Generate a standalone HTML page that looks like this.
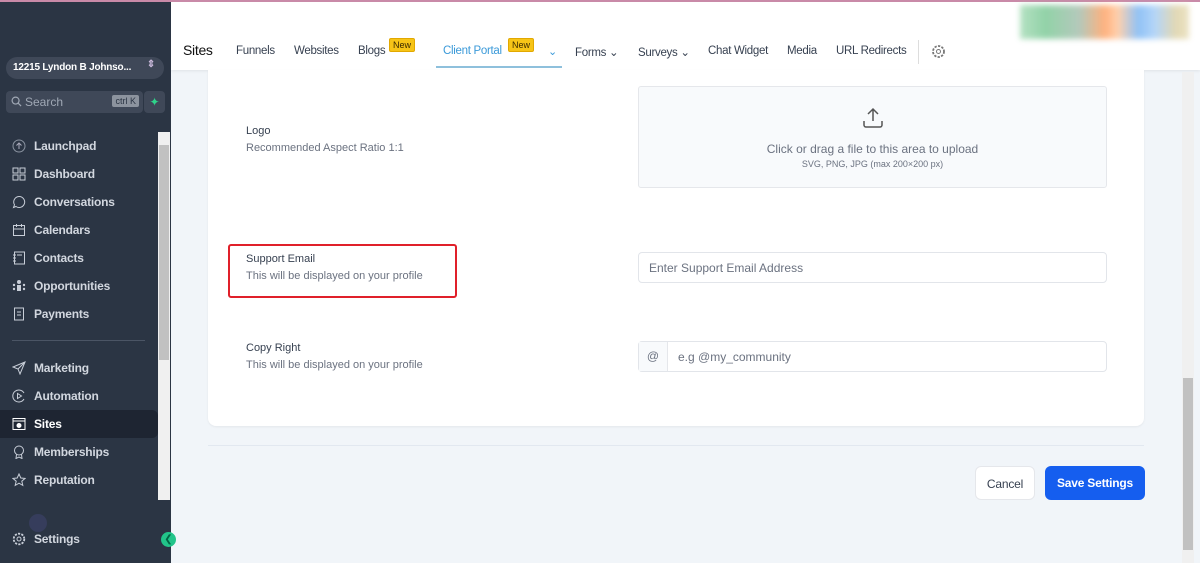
<!DOCTYPE html>
<html><head><style>
*{box-sizing:border-box;margin:0;padding:0}
body{width:1200px;height:563px;overflow:hidden;background:#f1f5f9;font-family:"Liberation Sans",sans-serif;position:relative}
.sb{position:absolute;left:0;top:0;width:171px;height:563px;background:#2b3544}
.top{position:absolute;left:0;top:0;width:1200px;height:2px;background:#c98aa8}
.acct{position:absolute;left:6px;top:57px;width:158px;height:22px;border-radius:11px;background:#3f4858;color:#fff;font-size:10px;font-weight:bold;padding:5px 7px;letter-spacing:-.2px}
.search{position:absolute;left:6px;top:91px;width:137px;height:22px;border-radius:4px;background:#3f4858;color:#a0a8b5;font-size:12px;padding:4px 0 0 19px}
.kbd{position:absolute;right:4px;top:4px;background:#8c939e;color:#2b3544;font-size:9px;padding:1px 3px;border-radius:2px}
.spark{position:absolute;left:144px;top:91px;width:21px;height:22px;border-radius:4px;background:#3f4858;color:#2fd38a;font-size:12px;text-align:center;line-height:22px}
.nav{position:absolute;left:0;width:158px;height:28px;color:#d2d7df;font-size:12px;font-weight:bold;padding:7px 0 0 34px;letter-spacing:-.2px}
.nav svg{position:absolute;left:12px;top:7px}
.sel{background:#1e2532;color:#fff;border-radius:0 6px 6px 0}
.ssc{position:absolute;left:158px;top:132px;width:12px;height:368px;background:#f0f0f0}
.ssc i{position:absolute;left:1px;top:13px;width:10px;height:215px;background:#c1c1c1}
.hdr{position:absolute;left:171px;top:2px;width:1029px;height:68px;background:#fff;box-shadow:0 1px 3px rgba(0,0,0,.08)}
.tab{position:absolute;top:45px;font-size:11.5px;color:#374151;letter-spacing:-.3px}
.new{position:absolute;top:38px;background:#f6c417;color:#3a2a00;font-size:9px;padding:1px 3px;border-radius:2px;border:1px solid #e2a800}
.card{position:absolute;left:208px;top:70px;width:936px;height:356px;background:#fff;border-radius:0 0 8px 8px;box-shadow:0 1px 2px rgba(0,0,0,.06)}
.lbl{position:absolute;font-size:11px;color:#374151}
.lbl span{display:block;color:#6b7280;margin-top:5px}
.up{position:absolute;left:638px;top:86px;width:469px;height:102px;background:#f8fafc;border:1px solid #e5e7eb;border-radius:3px;text-align:center}
.inp{position:absolute;left:638px;width:469px;height:31px;border:1px solid #e2e5ea;border-radius:4px;background:#fff;font-size:12px;color:#6b7280}
.btn{position:absolute;top:466px;height:34px;border-radius:6px;font-size:12px;font-weight:bold;text-align:center;line-height:34px;letter-spacing:-.2px}
.rsc{position:absolute;left:1182px;top:72px;width:12px;height:491px;background:#f0f0f0}
.rsc i{position:absolute;left:1px;top:306px;width:10px;height:172px;background:#c1c1c1}
</style></head><body>
<div class="hdr"></div>
<div class="sb"></div>
<div class="top"></div>
<div class="acct">12215 Lyndon B Johnso...<span style="position:absolute;right:9px;top:2px;font-size:10px;color:#cbd">⇕</span></div>
<div class="search"><svg style="position:absolute;left:5px;top:5px" width="11" height="11" viewBox="0 0 12 12"><circle cx="5" cy="5" r="3.8" fill="none" stroke="#a0a8b5" stroke-width="1.3"/><path d="M8 8l3 3" stroke="#a0a8b5" stroke-width="1.3"/></svg>Search<span class="kbd">ctrl K</span></div>
<div class="spark">✦</div>
<div class="ssc"><i></i></div>
<div class="nav" style="top:132px"><svg width="14" height="14"><circle cx="7" cy="7" r="6" fill="none" stroke="#8a93a0"/><path d="M7 4v6M4.5 6.5L7 4l2.5 2.5" stroke="#aab" fill="none"/></svg>Launchpad</div>
<div class="nav" style="top:160px"><svg width="14" height="14" fill="none" stroke="#c8ced8"><rect x="1" y="1" width="5" height="5"/><rect x="8" y="1" width="5" height="5"/><rect x="1" y="8" width="5" height="5"/><rect x="8" y="8" width="5" height="5"/></svg>Dashboard</div>
<div class="nav" style="top:188px"><svg width="14" height="14" fill="none" stroke="#c8ced8"><path d="M7 1.5a5.5 5.5 0 1 1-3 10L1.5 12.5l1-2.7A5.5 5.5 0 0 1 7 1.5z"/></svg>Conversations</div>
<div class="nav" style="top:216px"><svg width="14" height="14" fill="none" stroke="#c8ced8"><rect x="1.5" y="2.5" width="11" height="10"/><path d="M1.5 6h11M4.5 1v3M9.5 1v3"/></svg>Calendars</div>
<div class="nav" style="top:244px"><svg width="14" height="14" fill="none" stroke="#c8ced8"><rect x="2.5" y="1" width="10" height="12"/><path d="M5 4h5M1 4h3M1 7h3M1 10h3"/></svg>Contacts</div>
<div class="nav" style="top:272px"><svg width="14" height="14" fill="#c8ced8"><circle cx="7" cy="3" r="2"/><rect x="5" y="6" width="4" height="6"/><circle cx="2" cy="6" r="1.2"/><circle cx="12" cy="6" r="1.2"/><circle cx="2" cy="10" r="1.2"/><circle cx="12" cy="10" r="1.2"/></svg>Opportunities</div>
<div class="nav" style="top:300px"><svg width="14" height="14" fill="none" stroke="#c8ced8"><rect x="2.5" y="1" width="9" height="12"/><path d="M5 5h4M5 8h4"/></svg>Payments</div>
<div style="position:absolute;left:12px;top:340px;width:133px;height:1px;background:#4b5565"></div>
<div class="nav" style="top:354px"><svg width="14" height="14" fill="none" stroke="#c8ced8"><path d="M13 1L1 6l5 2 2 5z M6 8l7-7"/></svg>Marketing</div>
<div class="nav" style="top:382px"><svg width="14" height="14" fill="none" stroke="#c8ced8"><path d="M12 4a6 6 0 1 0 0 6"/><path d="M5.5 4.5v5l4-2.5z"/></svg>Automation</div>
<div class="nav sel" style="top:410px"><svg width="14" height="14" fill="none" stroke="#fff"><rect x="1" y="1.5" width="12" height="11"/><path d="M1 4h12"/><circle cx="7" cy="8.5" r="2" fill="#fff"/></svg>Sites</div>
<div class="nav" style="top:438px"><svg width="14" height="14" fill="none" stroke="#c8ced8"><circle cx="7" cy="5.5" r="4.5"/><path d="M4.5 9.5L4 13.5l3-1.5 3 1.5-.5-4"/></svg>Memberships</div>
<div class="nav" style="top:466px"><svg width="14" height="14" fill="none" stroke="#c8ced8"><path d="M7 1l1.8 4 4.2.4-3.2 2.8 1 4.2L7 10.2 3.2 12.4l1-4.2L1 5.4l4.2-.4z"/></svg>Reputation</div>
<div style="position:absolute;left:29px;top:514px;width:18px;height:18px;border-radius:9px;background:#363d5c"></div>
<div class="nav" style="top:525px"><svg width="14" height="14" fill="none" stroke="#c8ced8"><circle cx="7" cy="7" r="2"/><circle cx="7" cy="7" r="5.3" stroke-dasharray="2.2 1.2" stroke-width="1.8"/></svg>Settings</div>
<div style="position:absolute;left:161px;top:532px;width:15px;height:15px;border-radius:8px;background:#22c48a;font-size:10px;line-height:15px;text-align:center;color:#064">❮</div>

<div class="tab" style="left:183px;top:42px;font-size:14px;color:#111">Sites</div>
<div class="tab" style="left:236px">Funnels</div>
<div class="tab" style="left:294px">Websites</div>
<div class="tab" style="left:358px">Blogs</div><div class="new" style="left:389px">New</div>
<div class="tab" style="left:443px;color:#3b9ad9">Client Portal</div><div class="new" style="left:508px">New</div>
<div class="tab" style="left:548px;color:#3b9ad9;font-size:11px">⌄</div>
<div style="position:absolute;left:436px;top:66px;width:126px;height:2px;background:#8ec0dc"></div>
<div class="tab" style="left:575px">Forms ⌄</div>
<div class="tab" style="left:638px">Surveys ⌄</div>
<div class="tab" style="left:708px">Chat Widget</div>
<div class="tab" style="left:787px">Media</div>
<div class="tab" style="left:836px">URL Redirects</div>
<div style="position:absolute;left:918px;top:40px;width:1px;height:24px;background:#ddd"></div>
<svg style="position:absolute;left:931px;top:44px" width="15" height="15" fill="none" stroke="#777"><circle cx="7.5" cy="7.5" r="2"/><circle cx="7.5" cy="7.5" r="5.5" stroke-dasharray="2.3 1.3" stroke-width="1.8"/></svg>
<div style="position:absolute;left:1020px;top:5px;width:169px;height:34px;background:linear-gradient(90deg,#a8dcb8,#7fcb99 15%,#a7c0b0 35%,#ffa468 50%,#ffc9a0 58%,#7db8f5 70%,#a9cff7 80%,#ddd2a8 92%,#e8ddb8);filter:blur(3px);opacity:.85"></div>

<div class="card"></div>
<div class="lbl" style="left:246px;top:125px">Logo<span>Recommended Aspect Ratio 1:1</span></div>
<div class="up"><svg style="margin-top:20px" width="22" height="22" fill="none" stroke="#555" stroke-width="1.5"><path d="M11 2v12M6 7l5-5 5 5M2 14v4a2 2 0 0 0 2 2h14a2 2 0 0 0 2-2v-4"/></svg>
<div style="font-size:12px;color:#6b7280;margin-top:8px">Click or drag a file to this area to upload</div>
<div style="font-size:9px;color:#6b7280;margin-top:3px">SVG, PNG, JPG (max 200×200 px)</div></div>
<div style="position:absolute;left:228px;top:244px;width:229px;height:54px;border:2px solid #e0202a;border-radius:3px"></div>
<div class="lbl" style="left:246px;top:253px">Support Email<span>This will be displayed on your profile</span></div>
<div class="inp" style="top:252px;padding:8px 10px">Enter Support Email Address</div>
<div class="lbl" style="left:246px;top:342px">Copy Right<span>This will be displayed on your profile</span></div>
<div class="inp" style="top:341px;padding:0"><div style="position:absolute;left:0;top:0;width:29px;height:29px;background:#f8fafc;border-right:1px solid #e5e7eb;text-align:center;line-height:29px">@</div><div style="position:absolute;left:39px;top:8px">e.g @my_community</div></div>
<div style="position:absolute;left:208px;top:445px;width:936px;height:1px;background:#e2e8f0"></div>
<div class="btn" style="left:975px;width:60px;background:#fff;border:1px solid #e5e7eb;color:#374151;font-weight:normal">Cancel</div>
<div class="btn" style="left:1045px;width:100px;background:#155eef;color:#fff">Save Settings</div>
<div class="rsc"><i></i></div>
</body></html>
